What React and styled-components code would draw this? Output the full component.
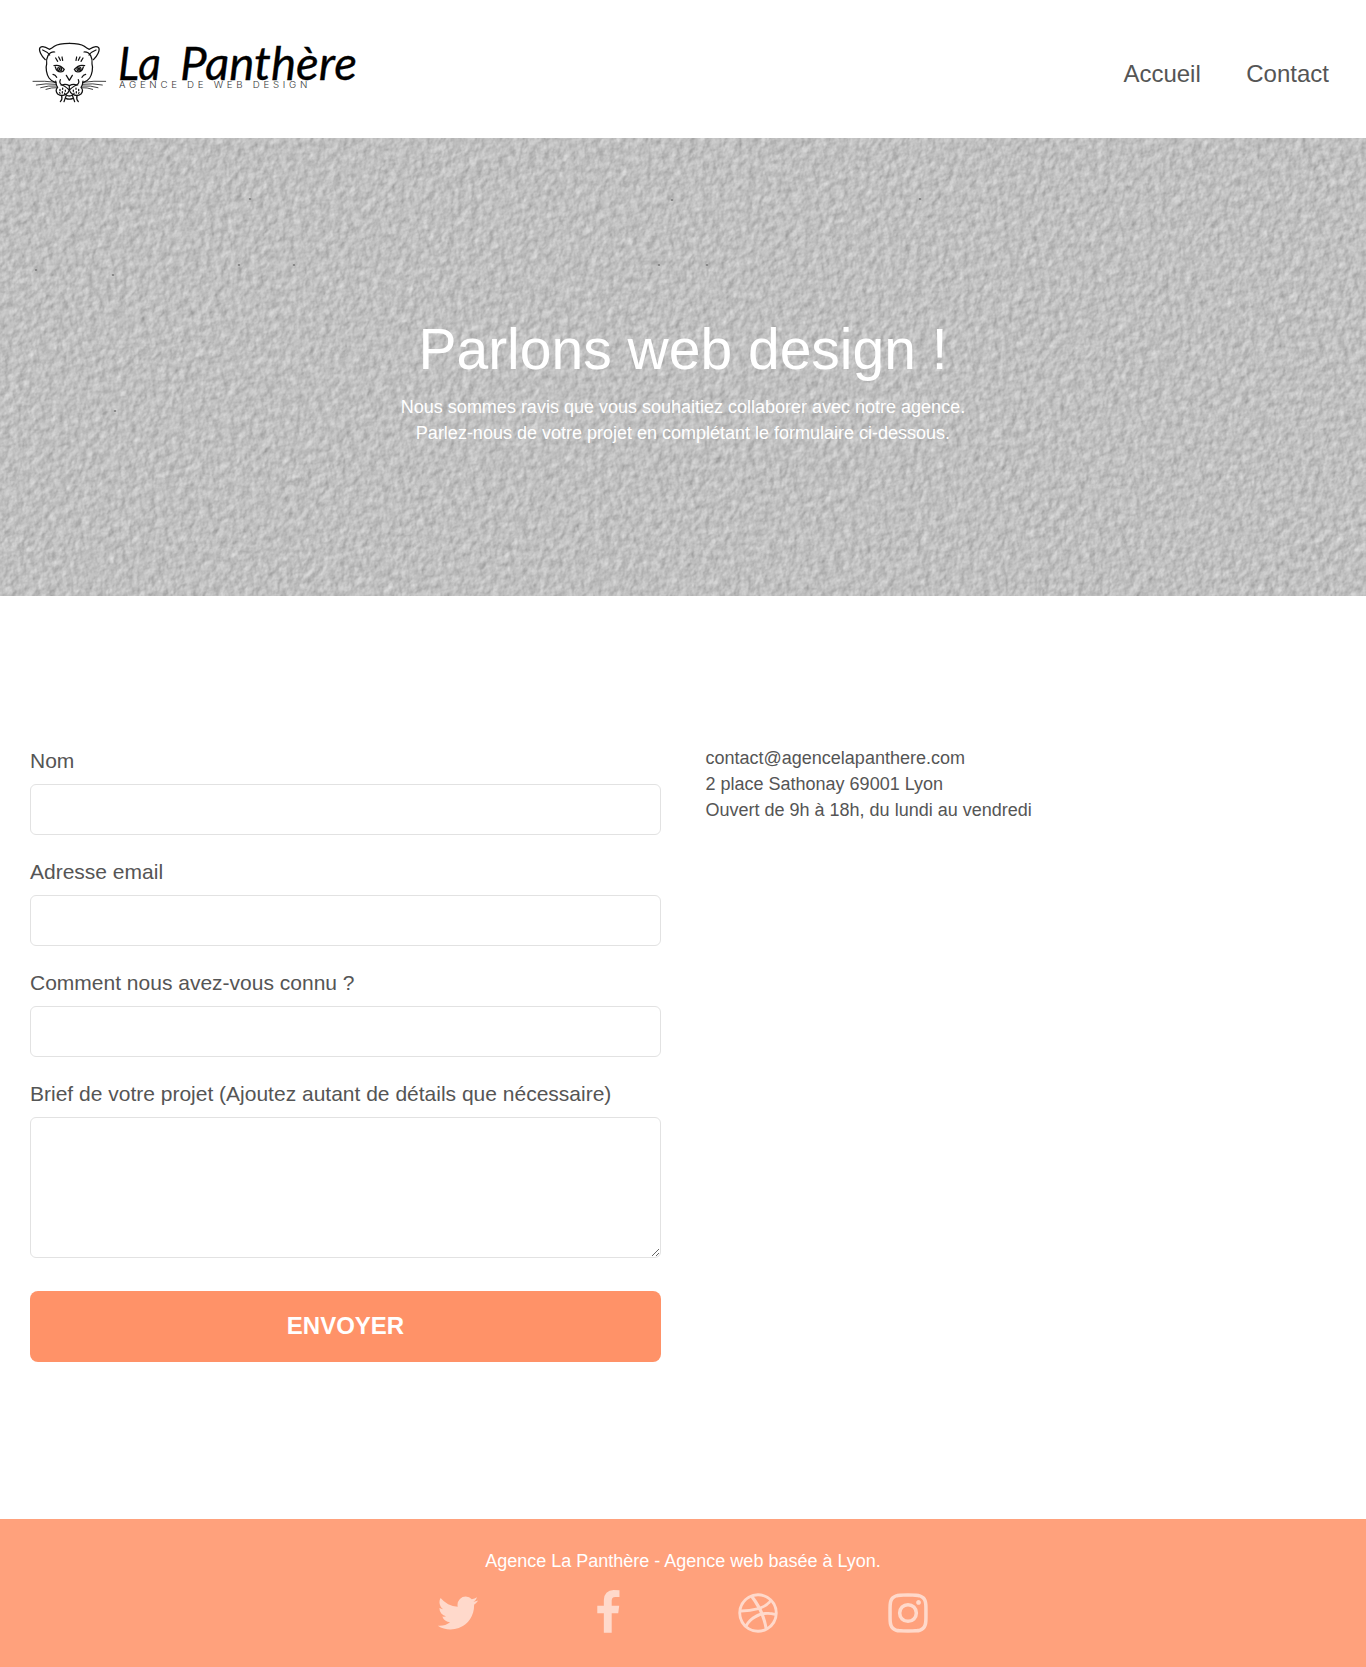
import React from "react";
import styled, { createGlobalStyle } from "styled-components";

const GlobalStyle = createGlobalStyle`
  *, *::before, *::after { box-sizing: border-box; }
  body {
    margin: 0;
    background: #fff;
    color: #555;
    font-family: "Liberation Sans", Arial, Helvetica, sans-serif;
    font-size: 18px;
    line-height: 26px;
  }
`;

const Header = styled.header`
  display: flex;
  justify-content: space-between;
  height: 138px;
  padding: 30px 37px 0 30px;
`;

const LogoLink = styled.a`
  display: block;
  width: 340px;
  height: 80px;
  svg { display: block; }
`;

const Nav = styled.nav`
  display: flex;
  gap: 45.5px;
  padding-top: 30px;
`;

const NavLink = styled.a`
  color: #555;
  font-size: 24px;
  line-height: 28px;
  text-decoration: none;
`;

const Hero = styled.section`
  position: relative;
  display: flex;
  flex-direction: column;
  align-items: center;
  height: 458px;
  padding-top: 178px;
  overflow: hidden;
  background: #c0c0c0;
  color: #fff;
  text-align: center;
`;

const Texture = styled.svg`
  position: absolute;
  inset: 0;
  width: 100%;
  height: 100%;
`;

const HeroTitle = styled.h1`
  position: relative;
  margin: 0;
  font-size: 57px;
  font-weight: 400;
  line-height: 66px;
`;

const HeroText = styled.p`
  position: relative;
  margin: 12px 0 0;
`;

const Main = styled.main`
  display: grid;
  grid-template-columns: 631px 1fr;
  column-gap: 44.5px;
  height: 923px;
  padding: 149px 30px 0;
`;

const Form = styled.form`
  display: flex;
  flex-direction: column;
  padding-top: 1px;
`;

const Field = styled.label`
  display: flex;
  flex-direction: column;
  gap: 8px;
  margin-bottom: 22px;
  font-size: 21px;
  line-height: 30px;
`;

const Input = styled.input`
  width: 100%;
  height: 51px;
  margin: 0;
  padding: 8px 12px;
  border: 1px solid #e2e2e2;
  border-radius: 6px;
  background: #fff;
  font: inherit;
`;

const TextArea = styled(Input)`
  display: block;
  height: 141px;
  resize: both;
`;

const Submit = styled.button`
  height: 71px;
  margin: 11px 0 0;
  padding: 0 0 2px;
  border: 0;
  border-radius: 8px;
  background: #ff9268;
  color: #fff;
  font: bold 24px/28px "Liberation Sans", Arial, sans-serif;
  text-transform: uppercase;
`;

const Details = styled.address`
  font-style: normal;
`;

const Line = styled.div``;

const Footer = styled.footer`
  display: flex;
  flex-direction: column;
  align-items: center;
  height: 148px;
  padding-top: 29px;
  background: #ffa17c;
  color: #fff;
`;

const Socials = styled.div`
  display: grid;
  grid-template-columns: repeat(4, 150px);
  justify-items: center;
  margin-top: 16px;
`;

const SocialLink = styled.a`
  width: 46px;
  height: 46px;
  color: #ffd9cb;
  svg { display: block; width: 46px; height: 46px; fill: currentColor; }
`;

const socials = [
  {
    name: "Twitter",
    d: "M1684 408q-67 98-162 167 1 14 1 42 0 130-38 259.5t-115.5 248.5-184.5 210.5-258 146-323 54.5q-271 0-496-145 35 4 78 4 225 0 401-138-105-2-188-64.5t-114-159.5q33 5 61 5 43 0 85-11-112-23-185.5-111.5t-73.5-205.5v-4q68 38 146 41-66-44-105-115t-39-154q0-88 44-163 121 149 294.5 238.5t371.5 99.5q-8-38-8-74 0-134 94.5-228.5t228.5-94.5q140 0 236 102 109-21 205-78-37 115-142 178 93-10 186-50z",
  },
  {
    name: "Facebook",
    d: "M1343 12v264h-157q-86 0-116 36t-30 108v189h293l-39 296h-254v759h-306v-759h-255v-296h255v-218q0-186 104-288.5t277-102.5q147 0 228 12z",
  },
  {
    name: "Dribbble",
    d: "M1152 1500q-42-241-140-498h-2l-2 1q-16 6-43 16.5t-101 49-137 82-131 114.5-103 148l-15-11q184 150 418 150 132 0 256-52zm-185-607q-21-49-53-111-311 93-673 93-1 7-1 21 0 124 44 236.5t124 201.5q50-89 123.5-166.5t142.5-124.5 130.5-81 99.5-48l37-13q4-1 13-3.5t13-4.5zm-107-212q-120-213-244-378-138 65-234 186t-128 272q302 0 606-80zm684 319q-210-60-409-29 87 239 128 469 111-75 185-189.5t96-250.5zm-805-741q-1 0-2 1 1-1 2-1zm590 145q-185-164-433-164-76 0-155 19 131 170 246 382 69-26 130-60.5t96.5-61.5 65.5-57 37.5-40.5zm223 485q-3-232-149-410l-1 1q-9 12-19 24.5t-43.5 44.5-71 60.5-100 65-131.5 64.5q25 53 44 95 2 5 6.5 17t7.5 17q36-5 74.5-7t73.5-2 69 1.5 64 4 56.5 5.5 48 6.5 36.5 6 25 4.5zm112 7q0 209-103 385.5t-279.5 279.5-385.5 103-385.5-103-279.5-279.5-103-385.5 103-385.5 279.5-279.5 385.5-103 385.5 103 279.5 279.5 103 385.5z",
  },
  {
    name: "Instagram",
    d: "M1152 896q0-106-75-181t-181-75-181 75-75 181 75 181 181 75 181-75 75-181zm138 0q0 164-115 279t-279 115-279-115-115-279 115-279 279-115 279 115 115 279zm108-410q0 38-27 65t-65 27-65-27-27-65 27-65 65-27 65 27 27 65zm-502-220q-7 0-76.5-.5t-105.5 0-96.5 3-103 10-71.5 18.5q-50 20-88 58t-58 88q-11 29-18.5 71.5t-10 103-3 96.5 0 105.5.5 76.5-.5 76.5 0 105.5 3 96.5 10 103 18.5 71.5q20 50 58 88t88 58q29 11 71.5 18.5t103 10 96.5 3 105.5 0 76.5-.5 76.5.5 105.5 0 96.5-3 103-10 71.5-18.5q50-20 88-58t58-88q11-29 18.5-71.5t10-103 3-96.5 0-105.5-.5-76.5.5-76.5 0-105.5-3-96.5-10-103-18.5-71.5q-20-50-58-88t-88-58q-29-11-71.5-18.5t-103-10-96.5-3-105.5 0-76.5.5zm768 630q0 229-5 317-10 208-124 322t-322 124q-88 5-317 5t-317-5q-208-10-322-124t-124-322q-5-88-5-317t5-317q10-208 124-322t322-124q88-5 317-5t317 5q208 10 322 124t124 322q5 88 5 317z",
  },
];

/* One half of the panther's head; the other half is its mirror image around x = 148. */
const HalfFace = () => (
  <>
    <path d="M148 40C132 40 113 42 103 49Q96 55 88 58C78 51 66 47 60 53C55 60 64 79 76 89" />
    <path d="M68 60Q83 66 89 75M104 66Q91 65 84 77Q78 88 80 102C76 113 80 134 87 144Q94 154 107 158" />
    <path d="M107 84L113 94M116 81L121 91M126 81L128 91" />
    <path d="M102 107Q119 102 133 118M106 111Q110 126 122 126Q131 125 132 118" />
    <circle cx="119" cy="117" r="6" />
    <circle cx="119" cy="117" r="1.6" fill="#111" />
    <path d="M99 133Q106 134 110 142M121 149Q116 160 127 165Q136 161 148 167" />
    <path d="M107 153Q108 166 113 172Q104 181 113 192Q125 201 139 192Q146 188 148 179M123 165Q132 165 148 180" />
    <path d="M108 157Q75 152 39 154M109 163Q77 159 49 165M110 168Q84 166 62 173M112 173Q94 172 78 178" strokeWidth="2.4" />
    <path d="M125 198Q128 208 121 215M139 196Q135 207 132 215" />
    <path d="M120 178v4M128 174v4M127 185v4M136 180v4M119 188l1 2M134 189v3" />
  </>
);

const Logo = () => (
  <svg width="340" height="80" viewBox="30 30 340 80" aria-label="La Panthère">
    <g
      transform="translate(20 30) scale(.33333)"
      fill="none"
      stroke="#111"
      strokeWidth="3.7"
      strokeLinecap="round"
      strokeLinejoin="round"
    >
      <HalfFace />
      <g transform="translate(296 0) scale(-1 1)">
        <HalfFace />
      </g>
      <path d="M139 136L148 151L157 136M148 167v13M138 194Q148 202 158 194M137 205Q148 210 159 205" />
    </g>
    <g fontFamily="Lato, sans-serif" fontStyle="italic" fontWeight="400" fontSize="46" fill="#000" stroke="#000" strokeWidth=".3">
      <text x="118" y="79.5" textLength="43" lengthAdjust="spacingAndGlyphs">La</text>
      <text x="180" y="79.5" textLength="177" lengthAdjust="spacingAndGlyphs">Panthère</text>
    </g>
    <text x="119" y="88" fontFamily="Inter, sans-serif" fontWeight="300" fontSize="8.4" fill="#333" textLength="192" lengthAdjust="spacingAndGlyphs" letterSpacing="3.2">
      AGENCE DE WEB DESIGN
    </text>
  </svg>
);

const specks = [[250, 61], [239, 127], [294, 127], [113, 137], [36, 132], [115, 273], [659, 127], [707, 127], [672, 62], [920, 61]];

const PaperTexture = () => (
  <Texture aria-hidden="true">
    <filter id="paper" x="0" y="0" width="100%" height="100%" colorInterpolationFilters="sRGB">
      <feTurbulence type="fractalNoise" baseFrequency=".137 .123" numOctaves="4" seed="11" result="fine" />
      <feDiffuseLighting in="fine" surfaceScale="1.1" diffuseConstant="1.06" lightingColor="#fff" result="relief">
        <feDistantLight azimuth="215" elevation="48" />
      </feDiffuseLighting>
      <feColorMatrix
        in="fine"
        values=".12 .08 0 0 .4  .12 .08 0 0 .4  .12 .08 0 0 .4  0 0 0 0 1"
        result="grain"
      />
      <feComposite in="relief" in2="grain" operator="arithmetic" k2=".38" k3="1" k4="-.045" />
    </filter>
    <rect width="100%" height="100%" filter="url(#paper)" />
    {specks.map(([x, y]) => (
      <ellipse key={`${x}-${y}`} cx={x} cy={y} rx="1.3" ry=".9" fill="#808080" />
    ))}
  </Texture>
);

export default function App() {
  return (
    <>
      <GlobalStyle />
      <Header>
        <LogoLink>
          <Logo />
        </LogoLink>
        <Nav>
          <NavLink>Accueil</NavLink>
          <NavLink>Contact</NavLink>
        </Nav>
      </Header>
      <Hero>
        <PaperTexture />
        <HeroTitle>Parlons web design !</HeroTitle>
        <HeroText>
          Nous sommes ravis que vous souhaitiez collaborer avec notre agence.
          <br />
          Parlez-nous de votre projet en complétant le formulaire ci-dessous.
        </HeroText>
      </Hero>
      <Main>
        <Form>
          <Field>
            Nom
            <Input />
          </Field>
          <Field>
            Adresse email
            <Input />
          </Field>
          <Field>
            Comment nous avez-vous connu ?
            <Input />
          </Field>
          <Field>
            Brief de votre projet (Ajoutez autant de détails que nécessaire)
            <TextArea as="textarea" />
          </Field>
          <Submit type="button">Envoyer</Submit>
        </Form>
        <Details>
          <Line>contact@agencelapanthere.com</Line>
          <Line>2 place Sathonay 69001 Lyon</Line>
          <Line>Ouvert de 9h à 18h, du lundi au vendredi</Line>
        </Details>
      </Main>
      <Footer>
        <Line>Agence La Panthère - Agence web basée à Lyon.</Line>
        <Socials>
          {socials.map(({ name, d }) => (
            <SocialLink key={name} aria-label={name}>
              <svg viewBox="0 0 1792 1792">
                <path d={d} />
              </svg>
            </SocialLink>
          ))}
        </Socials>
      </Footer>
    </>
  );
}
